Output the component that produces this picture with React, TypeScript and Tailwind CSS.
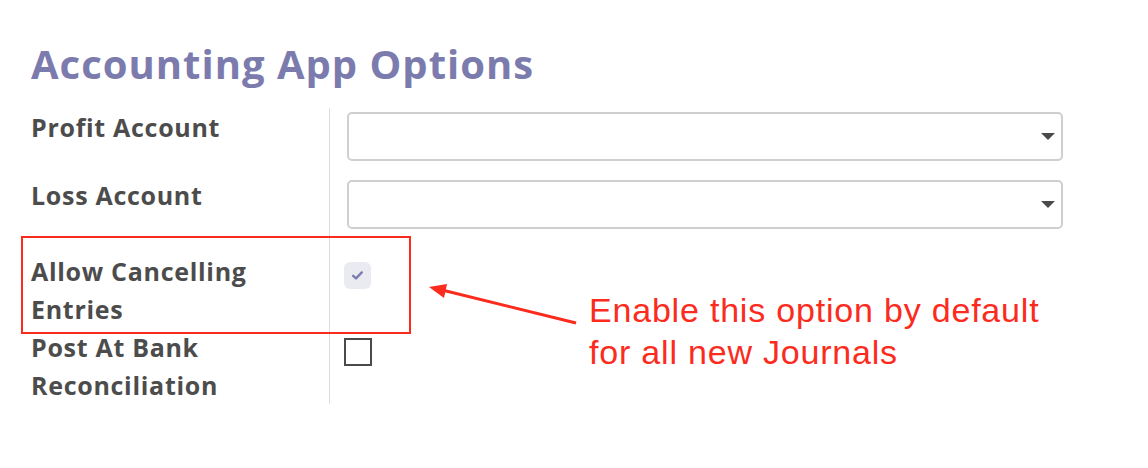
import { ReactNode } from "react";

const labelFont = { fontFamily: '"Open Sans", "DejaVu Sans", sans-serif' };

function SelectBox() {
  return (
    <div className="flex h-[49px] w-[716px] items-center justify-end rounded-[5px] border-2 border-[#cfcfcf] bg-white pr-[6px]">
      <svg width="14" height="8" viewBox="0 0 14 8">
        <polygon points="0,0 14,0 7,7" fill="#4a4a4a" />
      </svg>
    </div>
  );
}

function Row({ label, children, className }: { label: ReactNode; children: ReactNode; className?: string }) {
  return (
    <div className={`flex ${className ?? ""}`}>
      <div className="w-[299px] shrink-0 border-r border-[#dcdcdc] pr-4">
        <span className="block text-[25px] font-bold leading-[38px] tracking-[0.7px] text-[#4c4c4c]">{label}</span>
      </div>
      <div className="pl-[17px]">{children}</div>
    </div>
  );
}

export default function App() {
  return (
    <div className="relative h-[468px] w-[1148px] overflow-hidden bg-white" style={labelFont}>
      <div className="pl-[31px] pt-[40px]">
        <h1 className="text-[40px] font-bold leading-[48px] tracking-[1px] text-[#7c7bad]">Accounting App Options</h1>

        <div className="mt-[20px]">
          <Row label="Profit Account" className="h-[68px]">
            <div className="mt-[4px]">
              <SelectBox />
            </div>
          </Row>
          <Row label="Loss Account" className="h-[68px]">
            <div className="mt-[4px]">
              <SelectBox />
            </div>
          </Row>
          <div className="flex h-[8px]">
            <div className="w-[299px] border-r border-[#dcdcdc]" />
          </div>
          <Row label={<>Allow Cancelling<br />Entries</>}>
            <div className="ml-[-3px] mt-[10px] flex h-[27px] w-[27px] items-center justify-center rounded-[6px] bg-[#e9ebf1]">
              <svg width="11" height="9" viewBox="0 0 11 9">
                <path d="M1.2 4.8 L4 7.4 L9.8 1.4" fill="none" stroke="#7c7bad" strokeWidth="2.4" strokeLinecap="round" strokeLinejoin="round" />
              </svg>
            </div>
          </Row>
          <Row label={<>Post At Bank<br />Reconciliation</>}>
            <div className="ml-[-3px] mt-[10px] h-[28px] w-[28px] border-2 border-[#4a4a4a] bg-white" />
          </Row>
        </div>
      </div>

      {/* annotation overlay */}
      <div className="absolute left-[21px] top-[236px] h-[98px] w-[390px] border-2 border-[#fb2b1d]" />
      <svg className="absolute left-0 top-0" width="1148" height="468">
        <line x1="576" y1="323" x2="442" y2="290" stroke="#fb2b1d" strokeWidth="3" />
        <polygon points="429,287 444,298 447,284" fill="#fb2b1d" />
      </svg>
      <p
        className="absolute left-[589px] top-[289px] text-[34px] leading-[42px] tracking-[0.8px] text-[#fb2b1d]"
        style={{ fontFamily: '"Liberation Sans", Arial, sans-serif' }}
      >
        Enable this option by default
        <br />
        for all new Journals
      </p>
    </div>
  );
}
